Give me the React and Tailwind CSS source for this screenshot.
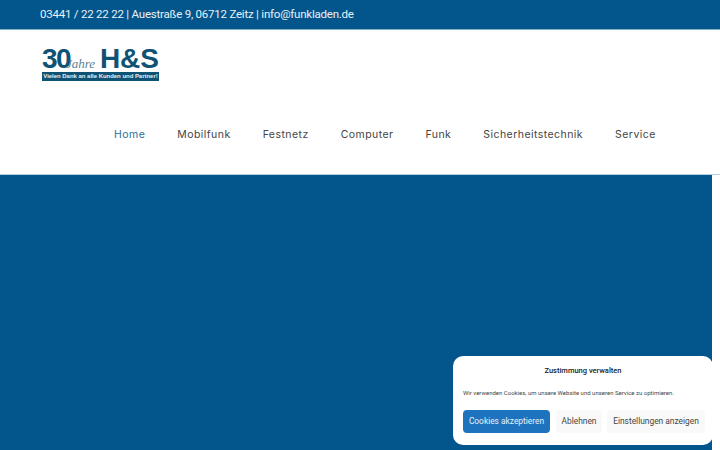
import React from 'react';

const navItems = ['Home', 'Mobilfunk', 'Festnetz', 'Computer', 'Funk', 'Sicherheitstechnik', 'Service'];

const Logo = () => (
    <div className="w-[117px] flex flex-col font-['Liberation_Sans',sans-serif]">
        <div className="relative h-[22px] flex items-center justify-between text-[#0f5274] font-bold leading-none">
            <span className="text-[28px] tracking-[-1.5px]">30</span>
            <span className="text-[28px]">H&amp;S</span>
            <span className="absolute left-[24px] top-[9px] text-[13px] italic font-normal leading-none font-['Liberation_Serif',serif] text-[#5d7f93]">Jahre</span>
        </div>
        <div className="mt-[2px] h-[9px] bg-[#0f5274] text-[#e8f0f4] text-[5.95px] font-bold leading-[9px] text-center whitespace-nowrap overflow-hidden">
            Vielen Dank an alle Kunden und Partner!
        </div>
    </div>
);

const CookieBanner = () => (
    <div className="absolute left-[453px] top-[356px] w-[260px] h-[89px] bg-white rounded-[10px] font-['Roboto',sans-serif]">
        <div className="pt-[9px] text-center text-[7.5px] font-medium text-[#222] leading-[12px]">Zustimmung verwalten</div>
        <p className="mt-[11px] px-[10px] text-[6px] text-[#444] leading-[10px] whitespace-nowrap">Wir verwenden Cookies, um unsere Website und unseren Service zu optimieren.</p>
        <div className="mt-[12px] pl-[10px] flex text-[8.4px] leading-none">
            <button className="h-[23px] w-[87px] rounded-[4px] bg-[#1e73be] text-[#e8f1f8]">Cookies akzeptieren</button>
            <button className="ml-[6px] h-[23px] w-[46px] rounded-[4px] bg-[#f9f9f9] text-[#444]">Ablehnen</button>
            <button className="ml-[5px] h-[23px] w-[98px] rounded-[4px] bg-[#f9f9f9] text-[#444]">Einstellungen anzeigen</button>
        </div>
    </div>
);

const App = () => {
    return (
        <div className="relative h-[450px] w-[720px] overflow-hidden bg-white">
            <div className="h-[30px] bg-[#03568c] border-b border-[#7fb0c8] pl-[40px] flex items-center text-[11.5px] tracking-[-0.22px] text-[#e9f1f6] font-['Roboto',sans-serif]">
                03441 / 22 22 22 | Auestraße 9, 06712 Zeitz | info@funkladen.de
            </div>
            <div className="h-[144px] flex flex-col">
                <div className="pl-[42px] pt-[18px]">
                    <Logo />
                </div>
                <nav className="mt-[46px] pl-[114px] flex gap-[32px] text-[10.5px] leading-[16px] tracking-[0.45px] text-[#444] font-['Inter',sans-serif]">
                    {navItems.map((item, idx) => (
                        <a key={idx} className={idx === 0 ? 'text-[#2a6f96]' : ''}>{item}</a>
                    ))}
                </nav>
            </div>
            <div className="h-[276px] border-t border-[#b5d3e0]">
                <div className="h-full w-[712px] bg-[#03568c]"></div>
            </div>
            <CookieBanner />
        </div>
    );
};

export default App;
